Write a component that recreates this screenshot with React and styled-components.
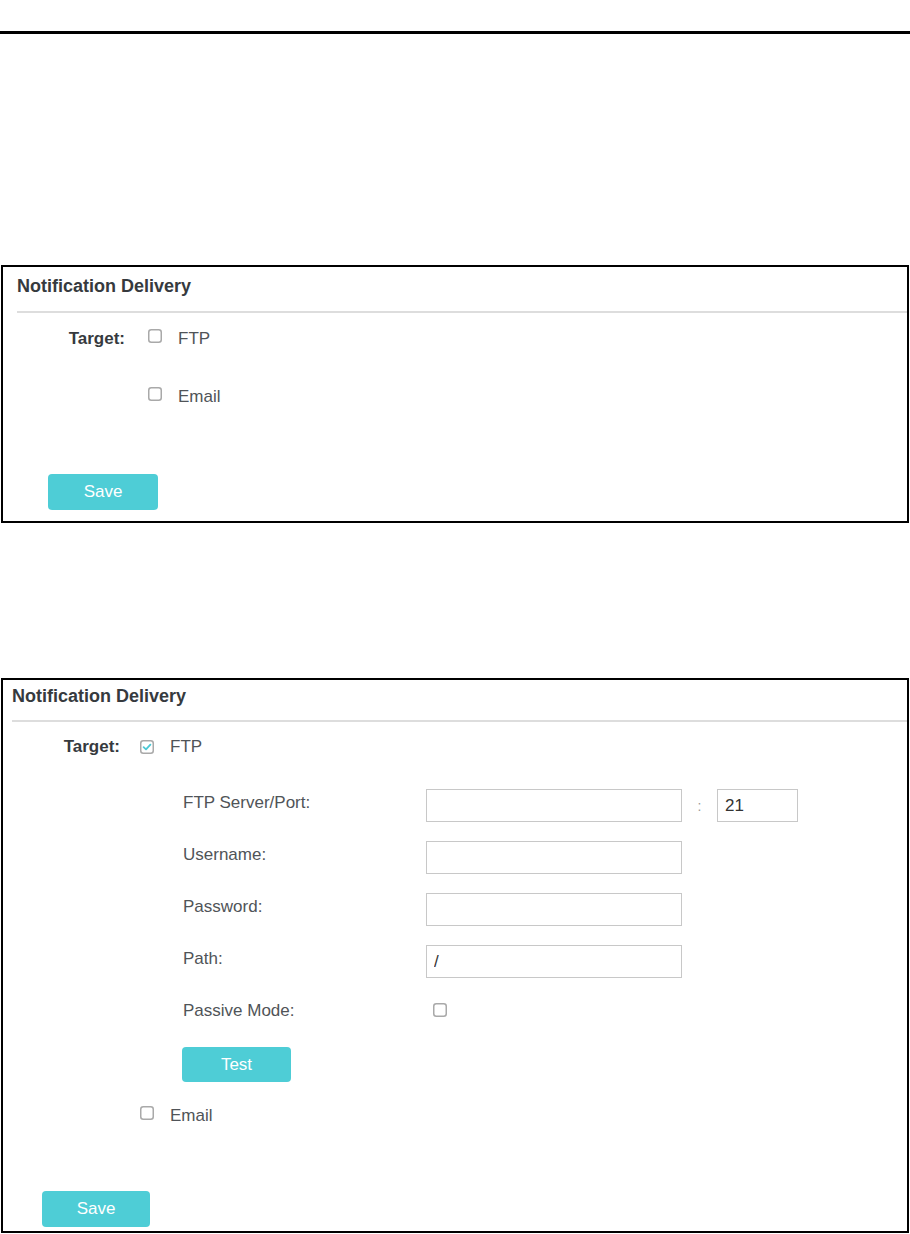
import React from 'react';
import styled, { createGlobalStyle } from 'styled-components';

const GlobalStyle = createGlobalStyle`
  body {
    margin: 0;
    background: #ffffff;
    font-family: 'Liberation Sans', Arial, sans-serif;
  }
`;

const Page = styled.div`
  width: 910px;
  padding-top: 31px;
  padding-bottom: 1px;
`;

const Rule = styled.div`
  height: 3px;
  background: #000;
`;

const Panel = styled.section`
  box-sizing: border-box;
  width: 908px;
  margin: ${p => p.$top}px 0 0 1px;
  border: 2px solid #000;
  padding-bottom: ${p => p.$padBottom}px;
`;

const PanelHeader = styled.div`
  margin-left: ${p => p.$indent}px;
  padding: ${p => p.$padTop}px 0 ${p => p.$padBottom}px;
  border-bottom: 2px solid #dddddd;
  font-size: 18px;
  line-height: 22px;
  font-weight: bold;
  color: #363a3e;
`;

const PanelBody = styled.div`
  padding-top: ${p => p.$padTop}px;
  display: flex;
  flex-direction: column;
  align-items: flex-start;
`;

const FieldRow = styled.div`
  display: flex;
  align-items: flex-start;
`;

const FieldLabel = styled.div`
  width: ${p => p.$width}px;
  text-align: right;
  font-size: 17px;
  line-height: 20px;
  font-weight: bold;
  color: #363a3e;
`;

const OptionList = styled.div`
  margin-left: ${p => p.$offset}px;
  display: flex;
  flex-direction: column;
  align-items: flex-start;
`;

const Option = styled.label`
  display: flex;
  align-items: flex-start;
  margin-top: ${p => p.$top || 0}px;
`;

const OptionText = styled.span`
  margin-left: 16px;
  font-size: 17px;
  line-height: 20px;
  color: #505458;
`;

const BoxWrap = styled.span`
  display: inline-flex;
  width: 14px;
  height: 14px;
  margin-top: ${p => p.$top || 0}px;
  margin-left: ${p => p.$left || 0}px;
`;

const CheckBox = ({ checked, top, left }) => (
  <BoxWrap $top={top} $left={left}>
    <svg width="14" height="14" viewBox="0 0 14 14">
      <rect x="0.75" y="0.75" width="12.5" height="12.5" rx="2.5" fill="#fff" stroke="#a9a9a9" strokeWidth="1.5" />
      {checked && (
        <polyline points="3.6,7.2 6,9.4 10.4,4.6" fill="none" stroke="#4cc8d4" strokeWidth="1.8" strokeLinecap="round" strokeLinejoin="round" />
      )}
    </svg>
  </BoxWrap>
);

const SubForm = styled.div`
  margin: 32px 0 0 43px;
  display: grid;
  grid-template-columns: 243px auto;
  row-gap: 19px;
  align-items: start;
`;

const SubLabel = styled.div`
  margin-top: 4px;
  font-size: 17px;
  line-height: 20px;
  color: #505458;
`;

const InputLine = styled.div`
  display: flex;
  align-items: center;
`;

const TextInput = styled.input`
  box-sizing: border-box;
  width: ${p => p.$width}px;
  height: 33px;
  margin: 0;
  padding: 0 7px;
  border: 1px solid #c8c8c8;
  border-radius: 0;
  outline: none;
  font-family: 'Liberation Sans', Arial, sans-serif;
  font-size: 17px;
  color: #333;
  background: #fff;
`;

const PortSep = styled.span`
  width: 35px;
  text-align: center;
  font-size: 14px;
  color: #9a9a9a;
`;

const Button = styled.button`
  box-sizing: border-box;
  width: ${p => p.$width}px;
  height: ${p => p.$height}px;
  margin: ${p => p.$top}px 0 0 ${p => p.$left}px;
  padding: 0;
  border: none;
  border-radius: 4px;
  background: #4ecdd6;
  color: #ffffff;
  font-family: 'Liberation Sans', Arial, sans-serif;
  font-size: 17px;
  cursor: pointer;
`;

const App = () => (
  <Page>
    <GlobalStyle />
    <Rule />

    <Panel $top={231} $padBottom={11}>
      <PanelHeader $indent={14} $padTop={8} $padBottom={14}>Notification Delivery</PanelHeader>
      <PanelBody $padTop={16}>
        <FieldRow>
          <FieldLabel $width={122}>Target:</FieldLabel>
          <OptionList $offset={23}>
            <Option>
              <CheckBox />
              <OptionText>FTP</OptionText>
            </Option>
            <Option $top={38}>
              <CheckBox />
              <OptionText>Email</OptionText>
            </Option>
          </OptionList>
        </FieldRow>
        <Button $width={110} $height={36} $top={67} $left={45}>Save</Button>
      </PanelBody>
    </Panel>

    <Panel $top={155} $padBottom={4}>
      <PanelHeader $indent={9} $padTop={5} $padBottom={13}>Notification Delivery</PanelHeader>
      <PanelBody $padTop={15}>
        <FieldRow>
          <FieldLabel $width={117}>Target:</FieldLabel>
          <OptionList $offset={20}>
            <Option>
              <CheckBox checked top={3} />
              <OptionText>FTP</OptionText>
            </Option>
            <SubForm>
              <SubLabel>FTP Server/Port:</SubLabel>
              <InputLine>
                <TextInput $width={256} />
                <PortSep>:</PortSep>
                <TextInput $width={81} defaultValue="21" />
              </InputLine>
              <SubLabel>Username:</SubLabel>
              <TextInput $width={256} />
              <SubLabel>Password:</SubLabel>
              <TextInput $width={256} type="password" />
              <SubLabel>Path:</SubLabel>
              <TextInput $width={256} defaultValue="/" />
              <SubLabel>Passive Mode:</SubLabel>
              <CheckBox top={6} left={7} />
              <Button $width={109} $height={35} $top={7} $left={-1}>Test</Button>
            </SubForm>
            <Option $top={24}>
              <CheckBox />
              <OptionText>Email</OptionText>
            </Option>
          </OptionList>
        </FieldRow>
        <Button $width={108} $height={36} $top={65} $left={39}>Save</Button>
      </PanelBody>
    </Panel>
  </Page>
);

export default App;
